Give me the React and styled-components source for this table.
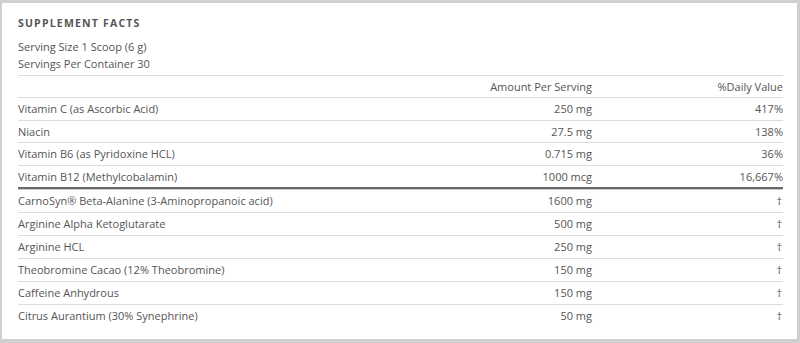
import React from "react";
import styled, { createGlobalStyle } from "styled-components";

const Global = createGlobalStyle`
  html, body { margin: 0; padding: 0; background: #cfcfcf; }
  body { font-family: "Open Sans", "Noto Sans", sans-serif; }
`;

const Frame = styled.div`
  padding: 3px 3px 4px 2px;
  height: 343px;
  box-sizing: border-box;
`;

const Panel = styled.div`
  background: #fff;
  height: 100%;
  box-sizing: border-box;
  padding: 14px 14px 12px 16px;
  color: #555;
`;

const Title = styled.h2`
  margin: 0;
  font-size: 10.5px;
  line-height: 12px;
  font-weight: 700;
  letter-spacing: 1.2px;
  color: #555;
  font-family: "Open Sans", sans-serif;
`;

const Serving = styled.div`
  margin-top: 9px;
  font-size: 11px;
  line-height: 17px;
  margin-bottom: 3px;
`;

const Table = styled.div`
  display: grid;
  grid-template-columns: 1fr 200px 191px;
  font-size: 11px;
`;

const Cell = styled.div`
  border-top: ${(p) => (p.$thick ? "2px solid #6a6a6a" : "1px solid #dcdcdc")};
  padding-top: ${(p) => (p.$thick ? "1px" : "0")};
  box-shadow: ${(p) => (p.$thick ? "inset 0 1px 0 #c8c8c8" : "none")};
  height: ${(p) => p.$h}px;
  line-height: ${(p) => p.$h}px;
  box-sizing: content-box;
  text-align: ${(p) => (p.$right ? "right" : "left")};
  white-space: nowrap;
`;

const Dagger = styled.span`
  padding-right: 1px;
`;

const top = [
  ["Vitamin C (as Ascorbic Acid)", "250 mg", "417%"],
  ["Niacin", "27.5 mg", "138%"],
  ["Vitamin B6 (as Pyridoxine HCL)", "0.715 mg", "36%"],
  ["Vitamin B12 (Methylcobalamin)", "1000 mcg", "16,667%"],
];

const bottom = [
  ["CarnoSyn\u00ae Beta-Alanine (3-Aminopropanoic acid)", "1600 mg"],
  ["Arginine Alpha Ketoglutarate", "500 mg"],
  ["Arginine HCL", "250 mg"],
  ["Theobromine Cacao (12% Theobromine)", "150 mg"],
  ["Caffeine Anhydrous", "150 mg"],
  ["Citrus Aurantium (30% Synephrine)", "50 mg"],
];

export default function App() {
  return (
    <>
      <Global />
      <Frame>
        <Panel>
          <Title>SUPPLEMENT FACTS</Title>
          <Serving>
            Serving Size 1 Scoop (6 g)
            <br />
            Servings Per Container 30
          </Serving>
          <Table>
            <Cell $h={21.4} />
            <Cell $h={21.4} $right>Amount Per Serving</Cell>
            <Cell $h={21.4} $right>%Daily Value</Cell>
            {top.map(([n, a, d]) => (
              <React.Fragment key={n}>
                <Cell $h={21.4}>{n}</Cell>
                <Cell $h={21.4} $right>{a}</Cell>
                <Cell $h={21.4} $right>{d}</Cell>
              </React.Fragment>
            ))}
            {bottom.map(([n, a], i) => (
              <React.Fragment key={n}>
                <Cell $h={22} $thick={i === 0}>{n}</Cell>
                <Cell $h={22} $thick={i === 0} $right>{a}</Cell>
                <Cell $h={22} $thick={i === 0} $right>
                  <Dagger>†</Dagger>
                </Cell>
              </React.Fragment>
            ))}
          </Table>
        </Panel>
      </Frame>
    </>
  );
}
